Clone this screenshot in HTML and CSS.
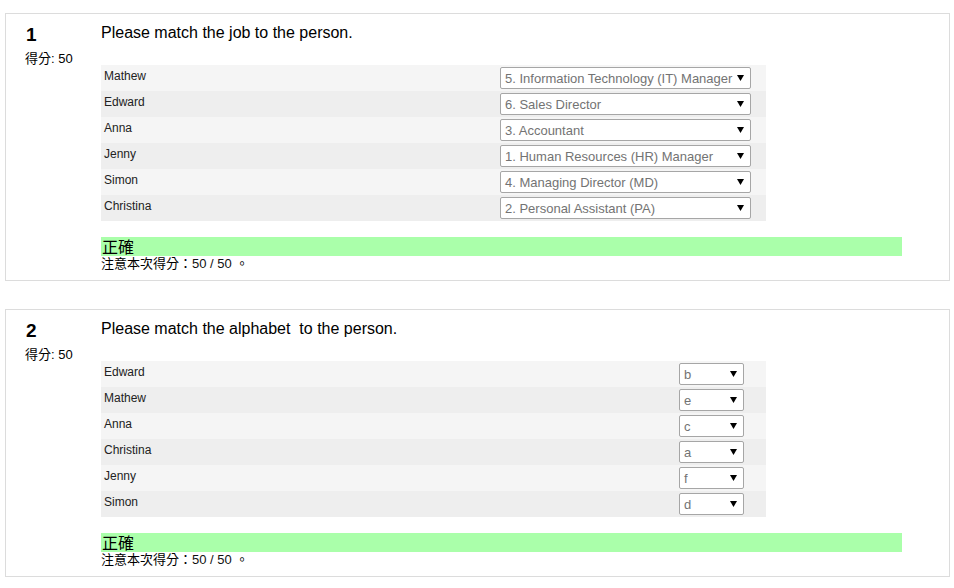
FILE: index.html
```html
<!DOCTYPE html>
<html>
<head>
<meta charset="utf-8">
<link rel="stylesheet" href="styles.css">
</head>
<body>
<div class="page">
  <div class="que">
    <div class="info">
      <div class="no">1</div>
      <div class="grade">得分: 50</div>
    </div>
    <div class="content">
      <div class="qtext">Please match the job to the person.</div>
      <table class="answer">
        <tr class="r0"><td class="text">Mathew</td><td class="control"><div class="sel wide"><span>5. Information Technology (IT) Manager</span><svg width="7" height="6" viewBox="0 0 7 6"><path d="M0 0H7L3.5 6Z" fill="#000"/></svg></div></td></tr>
        <tr class="r1"><td class="text">Edward</td><td class="control"><div class="sel wide"><span>6. Sales Director</span><svg width="7" height="6" viewBox="0 0 7 6"><path d="M0 0H7L3.5 6Z" fill="#000"/></svg></div></td></tr>
        <tr class="r0"><td class="text">Anna</td><td class="control"><div class="sel wide"><span>3. Accountant</span><svg width="7" height="6" viewBox="0 0 7 6"><path d="M0 0H7L3.5 6Z" fill="#000"/></svg></div></td></tr>
        <tr class="r1"><td class="text">Jenny</td><td class="control"><div class="sel wide"><span>1. Human Resources (HR) Manager</span><svg width="7" height="6" viewBox="0 0 7 6"><path d="M0 0H7L3.5 6Z" fill="#000"/></svg></div></td></tr>
        <tr class="r0"><td class="text">Simon</td><td class="control"><div class="sel wide"><span>4. Managing Director (MD)</span><svg width="7" height="6" viewBox="0 0 7 6"><path d="M0 0H7L3.5 6Z" fill="#000"/></svg></div></td></tr>
        <tr class="r1"><td class="text">Christina</td><td class="control"><div class="sel wide"><span>2. Personal Assistant (PA)</span><svg width="7" height="6" viewBox="0 0 7 6"><path d="M0 0H7L3.5 6Z" fill="#000"/></svg></div></td></tr>
      </table>
      <div class="outcome">
        <div class="correct">正確</div>
        <div class="feedback">注意本次得分：<span class="num">50 / 50</span> 。</div>
      </div>
    </div>
  </div>

  <div class="que">
    <div class="info">
      <div class="no">2</div>
      <div class="grade">得分: 50</div>
    </div>
    <div class="content">
      <div class="qtext">Please match the alphabet&nbsp; to the person.</div>
      <table class="answer">
        <tr class="r0"><td class="text">Edward</td><td class="control"><div class="sel narrow"><span>b</span><svg width="7" height="6" viewBox="0 0 7 6"><path d="M0 0H7L3.5 6Z" fill="#000"/></svg></div></td></tr>
        <tr class="r1"><td class="text">Mathew</td><td class="control"><div class="sel narrow"><span>e</span><svg width="7" height="6" viewBox="0 0 7 6"><path d="M0 0H7L3.5 6Z" fill="#000"/></svg></div></td></tr>
        <tr class="r0"><td class="text">Anna</td><td class="control"><div class="sel narrow"><span>c</span><svg width="7" height="6" viewBox="0 0 7 6"><path d="M0 0H7L3.5 6Z" fill="#000"/></svg></div></td></tr>
        <tr class="r1"><td class="text">Christina</td><td class="control"><div class="sel narrow"><span>a</span><svg width="7" height="6" viewBox="0 0 7 6"><path d="M0 0H7L3.5 6Z" fill="#000"/></svg></div></td></tr>
        <tr class="r0"><td class="text">Jenny</td><td class="control"><div class="sel narrow"><span>f</span><svg width="7" height="6" viewBox="0 0 7 6"><path d="M0 0H7L3.5 6Z" fill="#000"/></svg></div></td></tr>
        <tr class="r1"><td class="text">Simon</td><td class="control"><div class="sel narrow"><span>d</span><svg width="7" height="6" viewBox="0 0 7 6"><path d="M0 0H7L3.5 6Z" fill="#000"/></svg></div></td></tr>
      </table>
      <div class="outcome">
        <div class="correct">正確</div>
        <div class="feedback">注意本次得分：<span class="num">50 / 50</span> 。</div>
      </div>
    </div>
  </div>
</div>
</body>
</html>
```

FILE: styles.css
```css
html, body {
  margin: 0;
  padding: 0;
  background: #fff;
}
body {
  font-family: "Liberation Sans", Arial, "Noto Sans CJK TC", sans-serif;
  color: #000;
}
.page {
  padding: 13px 0 0 5px;
  display: flex;
  flex-direction: column;
  gap: 28px;
  width: 945px;
}
.que {
  border: 1px solid #dcdcdc;
  display: flex;
}
.info {
  width: 95px;
  padding: 10px 0 0 19px;
  box-sizing: border-box;
}
.no {
  font-size: 19px;
  font-weight: bold;
  line-height: 22px;
  padding-left: 1px;
}
.grade {
  font-size: 13px;
  line-height: 15px;
  margin-top: 5px;
}
.content {
  width: 801px;
  padding: 9px 0 9px 0;
}
.qtext {
  font-size: 16px;
  line-height: 20px;
  height: 20px;
}
.answer {
  margin-top: 22px;
  border-collapse: collapse;
  width: 665px;
}
.answer tr {
  height: 26px;
}
.answer td {
  padding: 0;
  vertical-align: top;
}
.r0 { background: #f5f5f5; }
.r1 { background: #eeeeee; }
.answer td.text {
  font-size: 12px;
  line-height: 14px;
  padding: 4px 0 0 3px;
  color: #222;
}
.answer td.control {
  text-align: right;
  padding: 2px 15px 0 0;
}
.sel {
  display: inline-flex;
  align-items: center;
  justify-content: space-between;
  box-sizing: border-box;
  height: 22px;
  border: 1px solid #a6a6a6;
  border-radius: 2px;
  background: #fff;
  padding: 0 6px 0 4px;
  font-size: 13px;
  color: #737373;
  text-align: left;
  vertical-align: top;
}
.sel svg {
  flex: none;
  margin-left: 4px;
}
.wide { width: 251px; }
.narrow { width: 65px; margin-right: 7px; }
.outcome {
  margin-top: 16px;
}
.correct {
  background: #aaffaa;
  font-size: 16px;
  line-height: 19px;
  height: 19px;
  padding-left: 1px;
  font-family: "Noto Sans CJK TC", sans-serif;
}
.feedback {
  font-size: 13px;
  line-height: 14px;
  margin-top: 1px;
}
.num { color: #111; }
```
